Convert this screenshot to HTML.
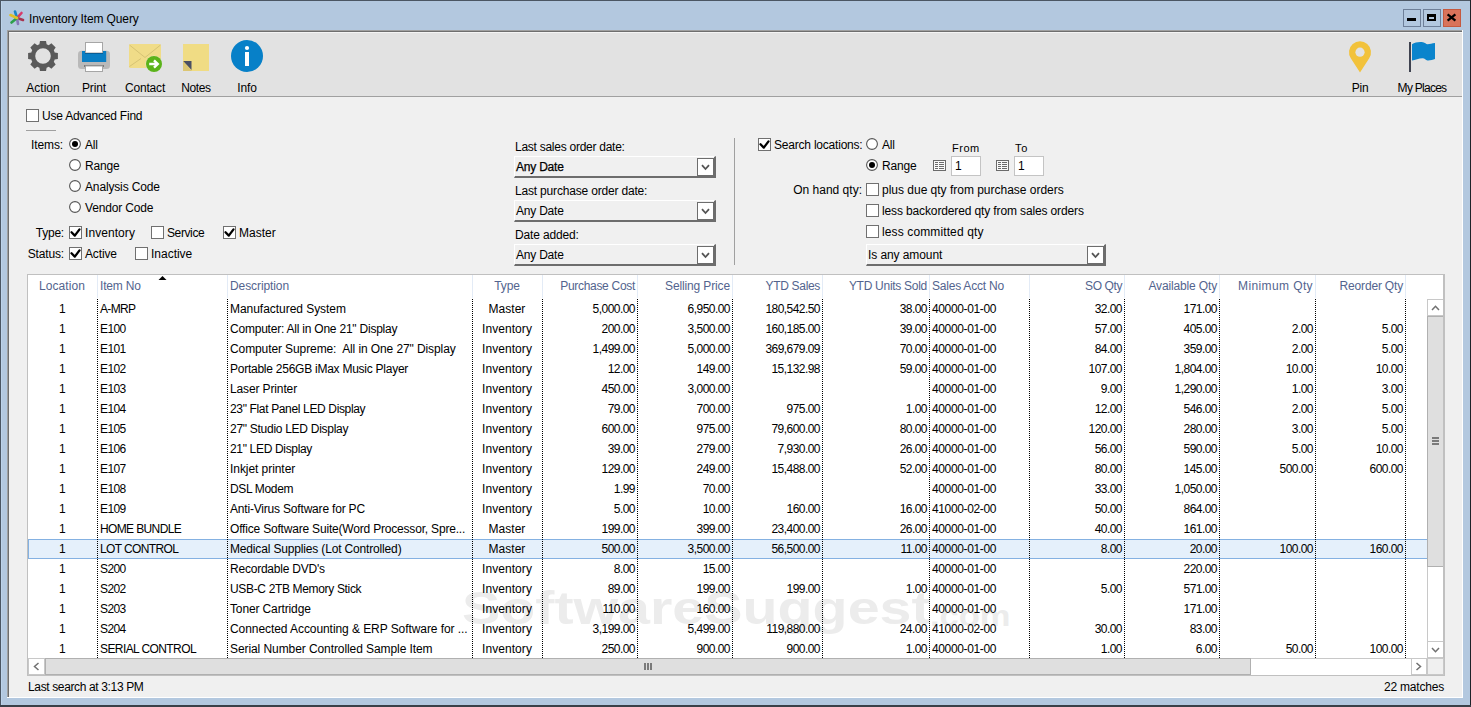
<!DOCTYPE html>
<html><head><meta charset="utf-8"><title>Inventory Item Query</title>
<style>
html,body{margin:0;padding:0}
body{width:1471px;height:707px;position:relative;overflow:hidden;background:#b3c8df;font-family:"Liberation Sans",sans-serif;font-size:12px;color:#000}
.a{position:absolute}
.t{position:absolute;white-space:pre;line-height:14px;font-size:12px}
.n{}
.h{color:#53648e}
.cb{position:absolute;width:11px;height:11px;border:1px solid #707070;background:#fff}
.rb{position:absolute;width:11px;height:11px;border:1px solid #333;border-radius:50%;background:#fff}
.combo{position:absolute;background:#f0f0f0;border-top:1px solid #fff;border-left:1px solid #fff;border-right:2px solid #6d6d6d;border-bottom:2px solid #6d6d6d;box-sizing:border-box}
.dd{position:absolute;width:17px;height:18px;box-sizing:border-box;border:1px solid #6d6d6d;background:#fff}
.dot{position:absolute;width:1px;background:repeating-linear-gradient(to bottom,#000 0,#000 1px,transparent 1px,transparent 2px)}
</style></head><body>

<div class="a" style="left:0px;top:0px;width:1471px;height:1px;background:#4b5663"></div>
<div class="a" style="left:0px;top:0px;width:1px;height:707px;background:#4b5663"></div>
<div class="a" style="left:1470px;top:0px;width:1px;height:707px;background:#1e2329"></div>
<div class="a" style="left:0px;top:705px;width:1471px;height:2px;background:#3a4048"></div>
<div class="a" style="left:1px;top:1px;width:1px;height:704px;background:#bdd3ea"></div>
<svg class="a" style="left:9px;top:10px" width="16" height="16" viewBox="0 0 16 16"><g stroke-width="2.6" stroke-linecap="round"><line x1="8" y1="8" x2="6" y2="1.5" stroke="#1a86c8"/><line x1="8" y1="8" x2="12.5" y2="3" stroke="#d83a6a"/><line x1="8" y1="8" x2="14" y2="10" stroke="#a8334f"/><line x1="8" y1="8" x2="9" y2="14" stroke="#8877b8"/><line x1="8" y1="8" x2="2.5" y2="12.5" stroke="#2da04a"/><line x1="8" y1="8" x2="1.5" y2="5" stroke="#e0c02a"/></g></svg>
<div class="t " style="left:29px;top:12px;letter-spacing:-0.12px;">Inventory Item Query</div>
<div class="a" style="left:1403px;top:9px;width:18px;height:18px;box-sizing:border-box;border:1px solid #6e7f98;background:#b3c8df"></div>
<div class="a" style="left:1407px;top:18px;width:9px;height:3px;background:#000"></div>
<div class="a" style="left:1423px;top:9px;width:18px;height:18px;box-sizing:border-box;border:1px solid #6e7f98;background:#b3c8df"></div>
<div class="a" style="left:1427px;top:14px;width:9px;height:7px;box-sizing:border-box;border:2px solid #000;border-top-width:3px"></div>
<div class="a" style="left:1443px;top:9px;width:18px;height:18px;box-sizing:border-box;border:1px solid #c5593f;background:#d9735b"></div>
<svg class="a" style="left:1446px;top:13px" width="11" height="9" viewBox="0 0 11 9"><path d="M1.6,1.4 L9.4,7.6 M9.4,1.4 L1.6,7.6" stroke="#000" stroke-width="2.3"/></svg>
<div class="a" style="left:7px;top:30px;width:1456px;height:668px;background:#f0f0f0"></div>
<div class="a" style="left:7px;top:30px;width:1455px;height:1px;background:#a0a0a0"></div>
<div class="a" style="left:7px;top:30px;width:1px;height:667px;background:#a0a0a0"></div>
<div class="a" style="left:8px;top:31px;width:1454px;height:1px;background:#6e6e6e"></div>
<div class="a" style="left:8px;top:31px;width:1px;height:666px;background:#6e6e6e"></div>
<div class="a" style="left:1462px;top:30px;width:1px;height:668px;background:#fff"></div>
<div class="a" style="left:7px;top:697px;width:1456px;height:1px;background:#fff"></div>
<div class="a" style="left:9px;top:32px;width:1453px;height:64px;background:#e2e2e2"></div>
<div class="a" style="left:9px;top:32px;width:1453px;height:1px;background:#f4f4f4"></div>
<div class="a" style="left:9px;top:96px;width:1453px;height:1px;background:#a0a0a0"></div>
<svg class="a" style="left:0;top:0" width="1471" height="100" viewBox="0 0 1471 100"><path d="M39.39,44.34 L39.98,41.10 L46.02,41.10 L46.61,44.34 L47.67,44.73 L48.69,45.21 L51.40,43.33 L55.67,47.60 L53.79,50.31 L54.27,51.33 L54.66,52.39 L57.90,52.98 L57.90,59.02 L54.66,59.61 L54.27,60.67 L53.79,61.69 L55.67,64.40 L51.40,68.67 L48.69,66.79 L47.67,67.27 L46.61,67.66 L46.02,70.90 L39.98,70.90 L39.39,67.66 L38.33,67.27 L37.31,66.79 L34.60,68.67 L30.33,64.40 L32.21,61.69 L31.73,60.67 L31.34,59.61 L28.10,59.02 L28.10,52.98 L31.34,52.39 L31.73,51.33 L32.21,50.31 L30.33,47.60 L34.60,43.33 L37.31,45.21 L38.33,44.73 Z M50.80,56 A7.8,7.8 0 1,0 35.20,56 A7.8,7.8 0 1,0 50.80,56 Z" fill="#5a5a5a" fill-rule="evenodd"/><rect x="78" y="50.7" width="32" height="18.3" rx="3.5" fill="#b9b9b9"/><rect x="82" y="51" width="24.2" height="11" fill="#0a7ec4"/><rect x="85.5" y="42.5" width="17" height="10.5" fill="#fff" stroke="#a6a6a6" stroke-width="1"/><rect x="85" y="53" width="18" height="1" fill="#0a5e96"/><rect x="84" y="65" width="20" height="2" fill="#7a7a7a"/><rect x="85.5" y="66" width="17" height="5.5" fill="#fff" stroke="#a6a6a6" stroke-width="1"/><rect x="129" y="44" width="32" height="24" rx="1.5" fill="#f0dc88"/><path d="M129.5,45 L145,57.5 L160.5,45 M129.5,66.5 L141,58.5" stroke="#d6c374" stroke-width="1" fill="none"/><circle cx="154" cy="64" r="8.6" fill="#e2e2e2" opacity="0.6"/><circle cx="154" cy="64" r="8" fill="#5bb31a"/><path d="M149.2,64 L157,64 M154,60.3 L157.8,64 L154,67.7" stroke="#fff" stroke-width="2.4" fill="none" stroke-linejoin="miter"/><rect x="183" y="44" width="26" height="27" fill="#f0dc84"/><path d="M183,61 L191.5,61 L191.5,70 Z" fill="#4a4f63"/><path d="M183,61 L183,71 L192,71 Z" fill="#dcc672"/><circle cx="247" cy="56" r="16" fill="#0780c8"/><circle cx="247" cy="48" r="2.1" fill="#fff"/><rect x="245" y="52" width="4" height="14" fill="#fff"/><path d="M1360,72.4 L1350.78,58.19 A11,11 0 1,1 1369.22,58.19 Z" fill="#f2c23b"/><circle cx="1360" cy="52.2" r="4.6" fill="#e2e2e2"/><rect x="1409" y="42" width="2" height="30" fill="#3f4350"/><path d="M1412,44.2 C1415,42.5 1419,41.6 1423,42.3 C1425,42.6 1426,44.3 1427.5,44.3 C1430,44.2 1432,43.3 1435,43 L1435,59 C1433,60 1430,60.5 1427.5,60.4 C1425.5,60.3 1425,58.4 1422.5,58.3 C1419,58.3 1415,60.5 1412,60.5 Z" fill="#0a84cc"/></svg>
<div class="t " style="left:-57px;width:200px;text-align:center;top:81px;letter-spacing:0.01px;">Action</div>
<div class="t " style="left:-6px;width:200px;text-align:center;top:81px;letter-spacing:-0.14px;">Print</div>
<div class="t " style="left:45px;width:200px;text-align:center;top:81px;letter-spacing:-0.18px;">Contact</div>
<div class="t " style="left:96px;width:200px;text-align:center;top:81px;letter-spacing:-0.41px;">Notes</div>
<div class="t " style="left:147px;width:200px;text-align:center;top:81px;letter-spacing:-0.09px;">Info</div>
<div class="t " style="left:1260px;width:200px;text-align:center;top:81px;letter-spacing:-0.23px;">Pin</div>
<div class="t " style="left:1322px;width:200px;text-align:center;top:81px;letter-spacing:-0.73px;">My Places</div>
<div class="cb" style="left:26px;top:109px"></div>
<div class="t " style="left:42px;top:109px;letter-spacing:-0.22px;">Use Advanced Find</div>
<div class="a" style="left:26px;top:130px;width:30px;height:1px;background:#a0a0a0"></div>
<div class="t " style="right:1408.0px;top:138px;letter-spacing:-0.13px;">Items:</div>
<svg class="a" style="left:69px;top:138px" width="12" height="12" viewBox="0 0 12 12"><circle cx="6" cy="6" r="5.4" fill="#fff" stroke="#555" stroke-width="1.1"/><circle cx="6" cy="6" r="3" fill="#000"/></svg>
<div class="t " style="left:85px;top:138px;letter-spacing:-0.22px;">All</div>
<svg class="a" style="left:69px;top:159px" width="12" height="12" viewBox="0 0 12 12"><circle cx="6" cy="6" r="5.4" fill="#fff" stroke="#555" stroke-width="1.1"/></svg>
<div class="t " style="left:85px;top:159px;letter-spacing:-0.16px;">Range</div>
<svg class="a" style="left:69px;top:180px" width="12" height="12" viewBox="0 0 12 12"><circle cx="6" cy="6" r="5.4" fill="#fff" stroke="#555" stroke-width="1.1"/></svg>
<div class="t " style="left:85px;top:180px;letter-spacing:-0.15px;">Analysis Code</div>
<svg class="a" style="left:69px;top:201px" width="12" height="12" viewBox="0 0 12 12"><circle cx="6" cy="6" r="5.4" fill="#fff" stroke="#555" stroke-width="1.1"/></svg>
<div class="t " style="left:85px;top:201px;letter-spacing:-0.17px;">Vendor Code</div>
<div class="t " style="right:1407.0px;top:226px;letter-spacing:-0.21px;">Type:</div>
<div class="cb" style="left:69px;top:226px"></div>
<svg class="a" style="left:69px;top:226px" width="13" height="13" viewBox="0 0 13 13"><path d="M2.5,6.3 L5.8,9.6 L10.5,3.4" stroke="#000" stroke-width="2.3" fill="none" stroke-linecap="round" stroke-linejoin="round"/></svg>
<div class="t " style="left:85px;top:226px;letter-spacing:0.07px;">Inventory</div>
<div class="cb" style="left:151px;top:226px"></div>
<div class="t " style="left:167px;top:226px;letter-spacing:-0.39px;">Service</div>
<div class="cb" style="left:223px;top:226px"></div>
<svg class="a" style="left:223px;top:226px" width="13" height="13" viewBox="0 0 13 13"><path d="M2.5,6.3 L5.8,9.6 L10.5,3.4" stroke="#000" stroke-width="2.3" fill="none" stroke-linecap="round" stroke-linejoin="round"/></svg>
<div class="t " style="left:239px;top:226px;letter-spacing:0.02px;">Master</div>
<div class="t " style="right:1407.0px;top:247px;letter-spacing:-0.16px;">Status:</div>
<div class="cb" style="left:69px;top:247px"></div>
<svg class="a" style="left:69px;top:247px" width="13" height="13" viewBox="0 0 13 13"><path d="M2.5,6.3 L5.8,9.6 L10.5,3.4" stroke="#000" stroke-width="2.3" fill="none" stroke-linecap="round" stroke-linejoin="round"/></svg>
<div class="t " style="left:85px;top:247px;letter-spacing:-0.13px;">Active</div>
<div class="cb" style="left:135px;top:247px"></div>
<div class="t " style="left:151px;top:247px;letter-spacing:-0.01px;">Inactive</div>
<div class="t " style="left:515px;top:140px;letter-spacing:-0.26px;">Last sales order date:</div>
<div class="combo" style="left:514px;top:156px;width:202px;height:22px"></div>
<div class="dd" style="left:697px;top:158px"></div>
<svg class="a" style="left:701px;top:164px" width="9" height="7" viewBox="0 0 9 7"><path d="M1,1.2 L4.5,5 L8,1.2" stroke="#555" stroke-width="1.8" fill="none"/></svg>
<div class="t " style="left:516px;top:160px;letter-spacing:-0.22px;-webkit-text-stroke:0.25px #000;">Any Date</div>
<div class="t " style="left:515px;top:184px;letter-spacing:-0.18px;">Last purchase order date:</div>
<div class="combo" style="left:514px;top:200px;width:202px;height:22px"></div>
<div class="dd" style="left:697px;top:202px"></div>
<svg class="a" style="left:701px;top:208px" width="9" height="7" viewBox="0 0 9 7"><path d="M1,1.2 L4.5,5 L8,1.2" stroke="#555" stroke-width="1.8" fill="none"/></svg>
<div class="t " style="left:516px;top:204px;letter-spacing:-0.22px;">Any Date</div>
<div class="t " style="left:515px;top:228px;letter-spacing:-0.15px;">Date added:</div>
<div class="combo" style="left:514px;top:244px;width:202px;height:22px"></div>
<div class="dd" style="left:697px;top:246px"></div>
<svg class="a" style="left:701px;top:252px" width="9" height="7" viewBox="0 0 9 7"><path d="M1,1.2 L4.5,5 L8,1.2" stroke="#555" stroke-width="1.8" fill="none"/></svg>
<div class="t " style="left:516px;top:248px;letter-spacing:-0.22px;">Any Date</div>
<div class="a" style="left:734px;top:138px;width:1px;height:127px;background:#a0a0a0"></div>
<div class="cb" style="left:758px;top:138px"></div>
<svg class="a" style="left:758px;top:138px" width="13" height="13" viewBox="0 0 13 13"><path d="M2.5,6.3 L5.8,9.6 L10.5,3.4" stroke="#000" stroke-width="2.3" fill="none" stroke-linecap="round" stroke-linejoin="round"/></svg>
<div class="t " style="left:774px;top:138px;letter-spacing:-0.21px;">Search locations:</div>
<svg class="a" style="left:866px;top:138px" width="12" height="12" viewBox="0 0 12 12"><circle cx="6" cy="6" r="5.4" fill="#fff" stroke="#555" stroke-width="1.1"/></svg>
<div class="t " style="left:882px;top:138px;letter-spacing:-0.22px;">All</div>
<svg class="a" style="left:866px;top:159px" width="12" height="12" viewBox="0 0 12 12"><circle cx="6" cy="6" r="5.4" fill="#fff" stroke="#555" stroke-width="1.1"/><circle cx="6" cy="6" r="3" fill="#000"/></svg>
<div class="t " style="left:882px;top:159px;letter-spacing:-0.16px;">Range</div>
<div class="t " style="left:952px;top:141px;font-size:11px;letter-spacing:0.5px">From</div>
<div class="t " style="left:1015px;top:141px;font-size:11px;letter-spacing:0.8px">To</div>
<svg class="a" style="left:933px;top:160px" width="13" height="11" viewBox="0 0 13 11"><rect x="0.5" y="0.5" width="12" height="10" fill="#fafafa" stroke="#6b6b6b"/><path d="M2,2.5 H5 M6,2.5 H11 M2,4.5 H5 M6,4.5 H11 M2,6.5 H5 M6,6.5 H11 M2,8.5 H5 M6,8.5 H11" stroke="#6b6b6b" stroke-width="1"/></svg>
<div class="a" style="left:951px;top:156px;width:30px;height:20px;box-sizing:border-box;border:1px solid #c4c4c4;background:#fff"></div>
<div class="t " style="left:955px;top:159px;letter-spacing:-0.59px;">1</div>
<svg class="a" style="left:996px;top:160px" width="13" height="11" viewBox="0 0 13 11"><rect x="0.5" y="0.5" width="12" height="10" fill="#fafafa" stroke="#6b6b6b"/><path d="M2,2.5 H5 M6,2.5 H11 M2,4.5 H5 M6,4.5 H11 M2,6.5 H5 M6,6.5 H11 M2,8.5 H5 M6,8.5 H11" stroke="#6b6b6b" stroke-width="1"/></svg>
<div class="a" style="left:1014px;top:156px;width:30px;height:20px;box-sizing:border-box;border:1px solid #c4c4c4;background:#fff"></div>
<div class="t " style="left:1018px;top:159px;letter-spacing:-0.59px;">1</div>
<div class="t " style="right:609.0px;top:183px;letter-spacing:0.01px;">On hand qty:</div>
<div class="cb" style="left:866px;top:183px"></div>
<div class="t " style="left:882px;top:183px;letter-spacing:-0.01px;">plus due qty from purchase orders</div>
<div class="cb" style="left:866px;top:204px"></div>
<div class="t " style="left:882px;top:204px;letter-spacing:-0.13px;">less backordered qty from sales orders</div>
<div class="cb" style="left:866px;top:225px"></div>
<div class="t " style="left:882px;top:225px;letter-spacing:0.12px;">less committed qty</div>
<div class="combo" style="left:866px;top:244px;width:240px;height:22px"></div>
<div class="dd" style="left:1087px;top:246px"></div>
<svg class="a" style="left:1091px;top:252px" width="9" height="7" viewBox="0 0 9 7"><path d="M1,1.2 L4.5,5 L8,1.2" stroke="#555" stroke-width="1.8" fill="none"/></svg>
<div class="t " style="left:868px;top:248px;letter-spacing:-0.09px;">Is any amount</div>
<div class="a" style="left:27px;top:274px;width:1418px;height:402px;background:#fff;box-sizing:border-box;border:1px solid #c0c0c0"></div>
<div class="a" style="left:97px;top:275px;width:1px;height:23px;background:#e3ebf6"></div>
<div class="a" style="left:227px;top:275px;width:1px;height:23px;background:#e3ebf6"></div>
<div class="a" style="left:472px;top:275px;width:1px;height:23px;background:#e3ebf6"></div>
<div class="a" style="left:542px;top:275px;width:1px;height:23px;background:#e3ebf6"></div>
<div class="a" style="left:637px;top:275px;width:1px;height:23px;background:#e3ebf6"></div>
<div class="a" style="left:732px;top:275px;width:1px;height:23px;background:#e3ebf6"></div>
<div class="a" style="left:822px;top:275px;width:1px;height:23px;background:#e3ebf6"></div>
<div class="a" style="left:929px;top:275px;width:1px;height:23px;background:#e3ebf6"></div>
<div class="a" style="left:1029px;top:275px;width:1px;height:23px;background:#e3ebf6"></div>
<div class="a" style="left:1124px;top:275px;width:1px;height:23px;background:#e3ebf6"></div>
<div class="a" style="left:1219px;top:275px;width:1px;height:23px;background:#e3ebf6"></div>
<div class="a" style="left:1315px;top:275px;width:1px;height:23px;background:#e3ebf6"></div>
<div class="a" style="left:1405px;top:275px;width:1px;height:23px;background:#e3ebf6"></div>
<div class="t h" style="left:-38px;width:200px;text-align:center;top:279px;letter-spacing:0.05px;">Location</div>
<div class="t h" style="left:100px;top:279px;letter-spacing:-0.20px;">Item No</div>
<div class="t h" style="left:230px;top:279px;letter-spacing:-0.09px;">Description</div>
<div class="t h" style="left:407px;width:200px;text-align:center;top:279px;letter-spacing:-0.17px;">Type</div>
<div class="t h" style="right:836.0px;top:279px;letter-spacing:-0.30px;">Purchase Cost</div>
<div class="t h" style="right:741.0px;top:279px;letter-spacing:-0.14px;">Selling Price</div>
<div class="t h" style="right:651.0px;top:279px;letter-spacing:-0.33px;">YTD Sales</div>
<div class="t h" style="right:544.0px;top:279px;letter-spacing:-0.28px;">YTD Units Sold</div>
<div class="t h" style="left:932px;top:279px;letter-spacing:-0.22px;">Sales Acct No</div>
<div class="t h" style="right:349.0px;top:279px;letter-spacing:-0.41px;">SO Qty</div>
<div class="t h" style="right:254.0px;top:279px;letter-spacing:-0.15px;">Available Qty</div>
<div class="t h" style="right:158.0px;top:279px;letter-spacing:0.39px;">Minimum Qty</div>
<div class="t h" style="right:68.0px;top:279px;letter-spacing:-0.18px;">Reorder Qty</div>
<svg class="a" style="left:158px;top:275px" width="9" height="6" viewBox="0 0 9 6"><path d="M0.5,5 L4.5,1 L8.5,5 Z" fill="#000"/></svg>
<div class="a" style="left:28px;top:539px;width:1399px;height:20px;background:#e5f0fb;box-sizing:border-box;border-top:1px solid #84b1e2;border-bottom:1px solid #84b1e2;border-left:1px solid #84b1e2"></div>
<div class="t" style="left:462px;top:578px;font-size:46px;line-height:60px;font-weight:bold;color:#ececec;transform:scaleX(1.247);transform-origin:0 0">SoftwareSuggest</div>
<div class="t" style="left:930px;top:596px;font-size:30px;line-height:40px;font-weight:bold;color:#ececec;transform:scaleX(1.15);transform-origin:0 0">.com</div>
<div class="dot" style="left:97px;top:299px;height:359px"></div>
<div class="dot" style="left:227px;top:299px;height:359px"></div>
<div class="dot" style="left:472px;top:299px;height:359px"></div>
<div class="dot" style="left:542px;top:299px;height:359px"></div>
<div class="dot" style="left:637px;top:299px;height:359px"></div>
<div class="dot" style="left:732px;top:299px;height:359px"></div>
<div class="dot" style="left:822px;top:299px;height:359px"></div>
<div class="dot" style="left:929px;top:299px;height:359px"></div>
<div class="dot" style="left:1029px;top:299px;height:359px"></div>
<div class="dot" style="left:1124px;top:299px;height:359px"></div>
<div class="dot" style="left:1219px;top:299px;height:359px"></div>
<div class="dot" style="left:1315px;top:299px;height:359px"></div>
<div class="dot" style="left:1405px;top:299px;height:359px"></div>
<div class="t " style="left:-38px;width:200px;text-align:center;top:302px;letter-spacing:-0.59px;">1</div>
<div class="t " style="left:100px;top:302px;letter-spacing:-0.64px;">A-MRP</div>
<div class="t " style="left:230px;top:302px;letter-spacing:-0.04px;">Manufactured System</div>
<div class="t " style="left:407px;width:200px;text-align:center;top:302px;letter-spacing:0.02px;">Master</div>
<div class="t n" style="right:836.0px;top:302px;letter-spacing:-0.54px;">5,000.00</div>
<div class="t n" style="right:741.0px;top:302px;letter-spacing:-0.54px;">6,950.00</div>
<div class="t n" style="right:651.0px;top:302px;letter-spacing:-0.55px;">180,542.50</div>
<div class="t n" style="right:544.0px;top:302px;letter-spacing:-0.55px;">38.00</div>
<div class="t n" style="left:932px;top:302px;letter-spacing:-0.37px;">40000-01-00</div>
<div class="t n" style="right:349.0px;top:302px;letter-spacing:-0.55px;">32.00</div>
<div class="t n" style="right:254.0px;top:302px;letter-spacing:-0.55px;">171.00</div>
<div class="t " style="left:-38px;width:200px;text-align:center;top:322px;letter-spacing:-0.59px;">1</div>
<div class="t " style="left:100px;top:322px;letter-spacing:-0.60px;">E100</div>
<div class="t " style="left:230px;top:322px;letter-spacing:-0.22px;">Computer: All in One 21" Display</div>
<div class="t " style="left:407px;width:200px;text-align:center;top:322px;letter-spacing:0.07px;">Inventory</div>
<div class="t n" style="right:836.0px;top:322px;letter-spacing:-0.55px;">200.00</div>
<div class="t n" style="right:741.0px;top:322px;letter-spacing:-0.54px;">3,500.00</div>
<div class="t n" style="right:651.0px;top:322px;letter-spacing:-0.55px;">160,185.00</div>
<div class="t n" style="right:544.0px;top:322px;letter-spacing:-0.55px;">39.00</div>
<div class="t n" style="left:932px;top:322px;letter-spacing:-0.37px;">40000-01-00</div>
<div class="t n" style="right:349.0px;top:322px;letter-spacing:-0.55px;">57.00</div>
<div class="t n" style="right:254.0px;top:322px;letter-spacing:-0.55px;">405.00</div>
<div class="t n" style="right:158.0px;top:322px;letter-spacing:-0.54px;">2.00</div>
<div class="t n" style="right:68.0px;top:322px;letter-spacing:-0.54px;">5.00</div>
<div class="t " style="left:-38px;width:200px;text-align:center;top:342px;letter-spacing:-0.59px;">1</div>
<div class="t " style="left:100px;top:342px;letter-spacing:-0.60px;">E101</div>
<div class="t " style="left:230px;top:342px;letter-spacing:-0.10px;">Computer Supreme:  All in One 27" Display</div>
<div class="t " style="left:407px;width:200px;text-align:center;top:342px;letter-spacing:0.07px;">Inventory</div>
<div class="t n" style="right:836.0px;top:342px;letter-spacing:-0.54px;">1,499.00</div>
<div class="t n" style="right:741.0px;top:342px;letter-spacing:-0.54px;">5,000.00</div>
<div class="t n" style="right:651.0px;top:342px;letter-spacing:-0.55px;">369,679.09</div>
<div class="t n" style="right:544.0px;top:342px;letter-spacing:-0.55px;">70.00</div>
<div class="t n" style="left:932px;top:342px;letter-spacing:-0.37px;">40000-01-00</div>
<div class="t n" style="right:349.0px;top:342px;letter-spacing:-0.55px;">84.00</div>
<div class="t n" style="right:254.0px;top:342px;letter-spacing:-0.55px;">359.00</div>
<div class="t n" style="right:158.0px;top:342px;letter-spacing:-0.54px;">2.00</div>
<div class="t n" style="right:68.0px;top:342px;letter-spacing:-0.54px;">5.00</div>
<div class="t " style="left:-38px;width:200px;text-align:center;top:362px;letter-spacing:-0.59px;">1</div>
<div class="t " style="left:100px;top:362px;letter-spacing:-0.60px;">E102</div>
<div class="t " style="left:230px;top:362px;letter-spacing:-0.25px;">Portable 256GB iMax Music Player</div>
<div class="t " style="left:407px;width:200px;text-align:center;top:362px;letter-spacing:0.07px;">Inventory</div>
<div class="t n" style="right:836.0px;top:362px;letter-spacing:-0.55px;">12.00</div>
<div class="t n" style="right:741.0px;top:362px;letter-spacing:-0.55px;">149.00</div>
<div class="t n" style="right:651.0px;top:362px;letter-spacing:-0.54px;">15,132.98</div>
<div class="t n" style="right:544.0px;top:362px;letter-spacing:-0.55px;">59.00</div>
<div class="t n" style="left:932px;top:362px;letter-spacing:-0.37px;">40000-01-00</div>
<div class="t n" style="right:349.0px;top:362px;letter-spacing:-0.55px;">107.00</div>
<div class="t n" style="right:254.0px;top:362px;letter-spacing:-0.54px;">1,804.00</div>
<div class="t n" style="right:158.0px;top:362px;letter-spacing:-0.55px;">10.00</div>
<div class="t n" style="right:68.0px;top:362px;letter-spacing:-0.55px;">10.00</div>
<div class="t " style="left:-38px;width:200px;text-align:center;top:382px;letter-spacing:-0.59px;">1</div>
<div class="t " style="left:100px;top:382px;letter-spacing:-0.60px;">E103</div>
<div class="t " style="left:230px;top:382px;letter-spacing:-0.13px;">Laser Printer</div>
<div class="t " style="left:407px;width:200px;text-align:center;top:382px;letter-spacing:0.07px;">Inventory</div>
<div class="t n" style="right:836.0px;top:382px;letter-spacing:-0.55px;">450.00</div>
<div class="t n" style="right:741.0px;top:382px;letter-spacing:-0.54px;">3,000.00</div>
<div class="t n" style="left:932px;top:382px;letter-spacing:-0.37px;">40000-01-00</div>
<div class="t n" style="right:349.0px;top:382px;letter-spacing:-0.54px;">9.00</div>
<div class="t n" style="right:254.0px;top:382px;letter-spacing:-0.54px;">1,290.00</div>
<div class="t n" style="right:158.0px;top:382px;letter-spacing:-0.54px;">1.00</div>
<div class="t n" style="right:68.0px;top:382px;letter-spacing:-0.54px;">3.00</div>
<div class="t " style="left:-38px;width:200px;text-align:center;top:402px;letter-spacing:-0.59px;">1</div>
<div class="t " style="left:100px;top:402px;letter-spacing:-0.60px;">E104</div>
<div class="t " style="left:230px;top:402px;letter-spacing:-0.35px;">23" Flat Panel LED Display</div>
<div class="t " style="left:407px;width:200px;text-align:center;top:402px;letter-spacing:0.07px;">Inventory</div>
<div class="t n" style="right:836.0px;top:402px;letter-spacing:-0.55px;">79.00</div>
<div class="t n" style="right:741.0px;top:402px;letter-spacing:-0.55px;">700.00</div>
<div class="t n" style="right:651.0px;top:402px;letter-spacing:-0.55px;">975.00</div>
<div class="t n" style="right:544.0px;top:402px;letter-spacing:-0.54px;">1.00</div>
<div class="t n" style="left:932px;top:402px;letter-spacing:-0.37px;">40000-01-00</div>
<div class="t n" style="right:349.0px;top:402px;letter-spacing:-0.55px;">12.00</div>
<div class="t n" style="right:254.0px;top:402px;letter-spacing:-0.55px;">546.00</div>
<div class="t n" style="right:158.0px;top:402px;letter-spacing:-0.54px;">2.00</div>
<div class="t n" style="right:68.0px;top:402px;letter-spacing:-0.54px;">5.00</div>
<div class="t " style="left:-38px;width:200px;text-align:center;top:422px;letter-spacing:-0.59px;">1</div>
<div class="t " style="left:100px;top:422px;letter-spacing:-0.60px;">E105</div>
<div class="t " style="left:230px;top:422px;letter-spacing:-0.28px;">27" Studio LED Display</div>
<div class="t " style="left:407px;width:200px;text-align:center;top:422px;letter-spacing:0.07px;">Inventory</div>
<div class="t n" style="right:836.0px;top:422px;letter-spacing:-0.55px;">600.00</div>
<div class="t n" style="right:741.0px;top:422px;letter-spacing:-0.55px;">975.00</div>
<div class="t n" style="right:651.0px;top:422px;letter-spacing:-0.54px;">79,600.00</div>
<div class="t n" style="right:544.0px;top:422px;letter-spacing:-0.55px;">80.00</div>
<div class="t n" style="left:932px;top:422px;letter-spacing:-0.37px;">40000-01-00</div>
<div class="t n" style="right:349.0px;top:422px;letter-spacing:-0.55px;">120.00</div>
<div class="t n" style="right:254.0px;top:422px;letter-spacing:-0.55px;">280.00</div>
<div class="t n" style="right:158.0px;top:422px;letter-spacing:-0.54px;">3.00</div>
<div class="t n" style="right:68.0px;top:422px;letter-spacing:-0.54px;">5.00</div>
<div class="t " style="left:-38px;width:200px;text-align:center;top:442px;letter-spacing:-0.59px;">1</div>
<div class="t " style="left:100px;top:442px;letter-spacing:-0.60px;">E106</div>
<div class="t " style="left:230px;top:442px;letter-spacing:-0.33px;">21" LED Display</div>
<div class="t " style="left:407px;width:200px;text-align:center;top:442px;letter-spacing:0.07px;">Inventory</div>
<div class="t n" style="right:836.0px;top:442px;letter-spacing:-0.55px;">39.00</div>
<div class="t n" style="right:741.0px;top:442px;letter-spacing:-0.55px;">279.00</div>
<div class="t n" style="right:651.0px;top:442px;letter-spacing:-0.54px;">7,930.00</div>
<div class="t n" style="right:544.0px;top:442px;letter-spacing:-0.55px;">26.00</div>
<div class="t n" style="left:932px;top:442px;letter-spacing:-0.37px;">40000-01-00</div>
<div class="t n" style="right:349.0px;top:442px;letter-spacing:-0.55px;">56.00</div>
<div class="t n" style="right:254.0px;top:442px;letter-spacing:-0.55px;">590.00</div>
<div class="t n" style="right:158.0px;top:442px;letter-spacing:-0.54px;">5.00</div>
<div class="t n" style="right:68.0px;top:442px;letter-spacing:-0.55px;">10.00</div>
<div class="t " style="left:-38px;width:200px;text-align:center;top:462px;letter-spacing:-0.59px;">1</div>
<div class="t " style="left:100px;top:462px;letter-spacing:-0.60px;">E107</div>
<div class="t " style="left:230px;top:462px;letter-spacing:-0.06px;">Inkjet printer</div>
<div class="t " style="left:407px;width:200px;text-align:center;top:462px;letter-spacing:0.07px;">Inventory</div>
<div class="t n" style="right:836.0px;top:462px;letter-spacing:-0.55px;">129.00</div>
<div class="t n" style="right:741.0px;top:462px;letter-spacing:-0.55px;">249.00</div>
<div class="t n" style="right:651.0px;top:462px;letter-spacing:-0.54px;">15,488.00</div>
<div class="t n" style="right:544.0px;top:462px;letter-spacing:-0.55px;">52.00</div>
<div class="t n" style="left:932px;top:462px;letter-spacing:-0.37px;">40000-01-00</div>
<div class="t n" style="right:349.0px;top:462px;letter-spacing:-0.55px;">80.00</div>
<div class="t n" style="right:254.0px;top:462px;letter-spacing:-0.55px;">145.00</div>
<div class="t n" style="right:158.0px;top:462px;letter-spacing:-0.55px;">500.00</div>
<div class="t n" style="right:68.0px;top:462px;letter-spacing:-0.55px;">600.00</div>
<div class="t " style="left:-38px;width:200px;text-align:center;top:482px;letter-spacing:-0.59px;">1</div>
<div class="t " style="left:100px;top:482px;letter-spacing:-0.60px;">E108</div>
<div class="t " style="left:230px;top:482px;letter-spacing:-0.34px;">DSL Modem</div>
<div class="t " style="left:407px;width:200px;text-align:center;top:482px;letter-spacing:0.07px;">Inventory</div>
<div class="t n" style="right:836.0px;top:482px;letter-spacing:-0.54px;">1.99</div>
<div class="t n" style="right:741.0px;top:482px;letter-spacing:-0.55px;">70.00</div>
<div class="t n" style="left:932px;top:482px;letter-spacing:-0.37px;">40000-01-00</div>
<div class="t n" style="right:349.0px;top:482px;letter-spacing:-0.55px;">33.00</div>
<div class="t n" style="right:254.0px;top:482px;letter-spacing:-0.54px;">1,050.00</div>
<div class="t " style="left:-38px;width:200px;text-align:center;top:502px;letter-spacing:-0.59px;">1</div>
<div class="t " style="left:100px;top:502px;letter-spacing:-0.60px;">E109</div>
<div class="t " style="left:230px;top:502px;letter-spacing:-0.19px;">Anti-Virus Software for PC</div>
<div class="t " style="left:407px;width:200px;text-align:center;top:502px;letter-spacing:0.07px;">Inventory</div>
<div class="t n" style="right:836.0px;top:502px;letter-spacing:-0.54px;">5.00</div>
<div class="t n" style="right:741.0px;top:502px;letter-spacing:-0.55px;">10.00</div>
<div class="t n" style="right:651.0px;top:502px;letter-spacing:-0.55px;">160.00</div>
<div class="t n" style="right:544.0px;top:502px;letter-spacing:-0.55px;">16.00</div>
<div class="t n" style="left:932px;top:502px;letter-spacing:-0.37px;">41000-02-00</div>
<div class="t n" style="right:349.0px;top:502px;letter-spacing:-0.55px;">50.00</div>
<div class="t n" style="right:254.0px;top:502px;letter-spacing:-0.55px;">864.00</div>
<div class="t " style="left:-38px;width:200px;text-align:center;top:522px;letter-spacing:-0.59px;">1</div>
<div class="t " style="left:100px;top:522px;letter-spacing:-0.63px;">HOME BUNDLE</div>
<div class="t " style="left:230px;top:522px;letter-spacing:-0.19px;">Office Software Suite(Word Processor, Spre...</div>
<div class="t " style="left:407px;width:200px;text-align:center;top:522px;letter-spacing:0.02px;">Master</div>
<div class="t n" style="right:836.0px;top:522px;letter-spacing:-0.55px;">199.00</div>
<div class="t n" style="right:741.0px;top:522px;letter-spacing:-0.55px;">399.00</div>
<div class="t n" style="right:651.0px;top:522px;letter-spacing:-0.54px;">23,400.00</div>
<div class="t n" style="right:544.0px;top:522px;letter-spacing:-0.55px;">26.00</div>
<div class="t n" style="left:932px;top:522px;letter-spacing:-0.37px;">40000-01-00</div>
<div class="t n" style="right:349.0px;top:522px;letter-spacing:-0.55px;">40.00</div>
<div class="t n" style="right:254.0px;top:522px;letter-spacing:-0.55px;">161.00</div>
<div class="t " style="left:-38px;width:200px;text-align:center;top:542px;letter-spacing:-0.59px;">1</div>
<div class="t " style="left:100px;top:542px;letter-spacing:-0.62px;">LOT CONTROL</div>
<div class="t " style="left:230px;top:542px;letter-spacing:-0.16px;">Medical Supplies (Lot Controlled)</div>
<div class="t " style="left:407px;width:200px;text-align:center;top:542px;letter-spacing:0.02px;">Master</div>
<div class="t n" style="right:836.0px;top:542px;letter-spacing:-0.55px;">500.00</div>
<div class="t n" style="right:741.0px;top:542px;letter-spacing:-0.54px;">3,500.00</div>
<div class="t n" style="right:651.0px;top:542px;letter-spacing:-0.54px;">56,500.00</div>
<div class="t n" style="right:544.0px;top:542px;letter-spacing:-0.55px;">11.00</div>
<div class="t n" style="left:932px;top:542px;letter-spacing:-0.37px;">40000-01-00</div>
<div class="t n" style="right:349.0px;top:542px;letter-spacing:-0.54px;">8.00</div>
<div class="t n" style="right:254.0px;top:542px;letter-spacing:-0.55px;">20.00</div>
<div class="t n" style="right:158.0px;top:542px;letter-spacing:-0.55px;">100.00</div>
<div class="t n" style="right:68.0px;top:542px;letter-spacing:-0.55px;">160.00</div>
<div class="t " style="left:-38px;width:200px;text-align:center;top:562px;letter-spacing:-0.59px;">1</div>
<div class="t " style="left:100px;top:562px;letter-spacing:-0.60px;">S200</div>
<div class="t " style="left:230px;top:562px;letter-spacing:-0.22px;">Recordable DVD's</div>
<div class="t " style="left:407px;width:200px;text-align:center;top:562px;letter-spacing:0.07px;">Inventory</div>
<div class="t n" style="right:836.0px;top:562px;letter-spacing:-0.54px;">8.00</div>
<div class="t n" style="right:741.0px;top:562px;letter-spacing:-0.55px;">15.00</div>
<div class="t n" style="left:932px;top:562px;letter-spacing:-0.37px;">40000-01-00</div>
<div class="t n" style="right:254.0px;top:562px;letter-spacing:-0.55px;">220.00</div>
<div class="t " style="left:-38px;width:200px;text-align:center;top:582px;letter-spacing:-0.59px;">1</div>
<div class="t " style="left:100px;top:582px;letter-spacing:-0.60px;">S202</div>
<div class="t " style="left:230px;top:582px;letter-spacing:-0.34px;">USB-C 2TB Memory Stick</div>
<div class="t " style="left:407px;width:200px;text-align:center;top:582px;letter-spacing:0.07px;">Inventory</div>
<div class="t n" style="right:836.0px;top:582px;letter-spacing:-0.55px;">89.00</div>
<div class="t n" style="right:741.0px;top:582px;letter-spacing:-0.55px;">199.00</div>
<div class="t n" style="right:651.0px;top:582px;letter-spacing:-0.55px;">199.00</div>
<div class="t n" style="right:544.0px;top:582px;letter-spacing:-0.54px;">1.00</div>
<div class="t n" style="left:932px;top:582px;letter-spacing:-0.37px;">40000-01-00</div>
<div class="t n" style="right:349.0px;top:582px;letter-spacing:-0.54px;">5.00</div>
<div class="t n" style="right:254.0px;top:582px;letter-spacing:-0.55px;">571.00</div>
<div class="t " style="left:-38px;width:200px;text-align:center;top:602px;letter-spacing:-0.59px;">1</div>
<div class="t " style="left:100px;top:602px;letter-spacing:-0.60px;">S203</div>
<div class="t " style="left:230px;top:602px;letter-spacing:-0.13px;">Toner Cartridge</div>
<div class="t " style="left:407px;width:200px;text-align:center;top:602px;letter-spacing:0.07px;">Inventory</div>
<div class="t n" style="right:836.0px;top:602px;letter-spacing:-0.55px;">110.00</div>
<div class="t n" style="right:741.0px;top:602px;letter-spacing:-0.55px;">160.00</div>
<div class="t n" style="left:932px;top:602px;letter-spacing:-0.37px;">40000-01-00</div>
<div class="t n" style="right:254.0px;top:602px;letter-spacing:-0.55px;">171.00</div>
<div class="t " style="left:-38px;width:200px;text-align:center;top:622px;letter-spacing:-0.59px;">1</div>
<div class="t " style="left:100px;top:622px;letter-spacing:-0.60px;">S204</div>
<div class="t " style="left:230px;top:622px;letter-spacing:-0.07px;">Connected Accounting &amp; ERP Software for ...</div>
<div class="t " style="left:407px;width:200px;text-align:center;top:622px;letter-spacing:0.07px;">Inventory</div>
<div class="t n" style="right:836.0px;top:622px;letter-spacing:-0.54px;">3,199.00</div>
<div class="t n" style="right:741.0px;top:622px;letter-spacing:-0.54px;">5,499.00</div>
<div class="t n" style="right:651.0px;top:622px;letter-spacing:-0.55px;">119,880.00</div>
<div class="t n" style="right:544.0px;top:622px;letter-spacing:-0.55px;">24.00</div>
<div class="t n" style="left:932px;top:622px;letter-spacing:-0.37px;">41000-02-00</div>
<div class="t n" style="right:349.0px;top:622px;letter-spacing:-0.55px;">30.00</div>
<div class="t n" style="right:254.0px;top:622px;letter-spacing:-0.55px;">83.00</div>
<div class="t " style="left:-38px;width:200px;text-align:center;top:642px;letter-spacing:-0.59px;">1</div>
<div class="t " style="left:100px;top:642px;letter-spacing:-0.59px;">SERIAL CONTROL</div>
<div class="t " style="left:230px;top:642px;letter-spacing:-0.08px;">Serial Number Controlled Sample Item</div>
<div class="t " style="left:407px;width:200px;text-align:center;top:642px;letter-spacing:0.07px;">Inventory</div>
<div class="t n" style="right:836.0px;top:642px;letter-spacing:-0.55px;">250.00</div>
<div class="t n" style="right:741.0px;top:642px;letter-spacing:-0.55px;">900.00</div>
<div class="t n" style="right:651.0px;top:642px;letter-spacing:-0.55px;">900.00</div>
<div class="t n" style="right:544.0px;top:642px;letter-spacing:-0.54px;">1.00</div>
<div class="t n" style="left:932px;top:642px;letter-spacing:-0.37px;">40000-01-00</div>
<div class="t n" style="right:349.0px;top:642px;letter-spacing:-0.54px;">1.00</div>
<div class="t n" style="right:254.0px;top:642px;letter-spacing:-0.54px;">6.00</div>
<div class="t n" style="right:158.0px;top:642px;letter-spacing:-0.55px;">50.00</div>
<div class="t n" style="right:68.0px;top:642px;letter-spacing:-0.55px;">100.00</div>
<div class="a" style="left:1427px;top:299px;width:17px;height:359px;background:#fff;box-sizing:border-box;border-left:1px solid #c8c8c8"></div>
<div class="a" style="left:1427px;top:299px;width:17px;height:17px;background:#fff;box-sizing:border-box;border:1px solid #c8c8c8"></div>
<svg class="a" style="left:1431px;top:305px" width="9" height="6" viewBox="0 0 9 6"><path d="M1,5 L4.5,1.3 L8,5" stroke="#707070" stroke-width="1.5" fill="none"/></svg>
<div class="a" style="left:1427px;top:316px;width:17px;height:251px;background:#dfdfdf;box-sizing:border-box;border:1px solid #b0b0b0"></div>
<div class="a" style="left:1432px;top:437px;width:7px;height:2px;background:#7a7a7a"></div>
<div class="a" style="left:1432px;top:440px;width:7px;height:2px;background:#7a7a7a"></div>
<div class="a" style="left:1432px;top:443px;width:7px;height:2px;background:#7a7a7a"></div>
<div class="a" style="left:1427px;top:641px;width:17px;height:17px;background:#fff;box-sizing:border-box;border:1px solid #c8c8c8"></div>
<svg class="a" style="left:1431px;top:647px" width="9" height="6" viewBox="0 0 9 6"><path d="M1,1 L4.5,4.7 L8,1" stroke="#707070" stroke-width="1.5" fill="none"/></svg>
<div class="a" style="left:1443px;top:275px;width:1px;height:400px;background:#c0c0c0"></div>
<div class="a" style="left:28px;top:658px;width:1416px;height:17px;background:#fff;box-sizing:border-box;border-top:1px solid #c8c8c8"></div>
<div class="a" style="left:28px;top:658px;width:17px;height:17px;background:#fff;box-sizing:border-box;border:1px solid #c8c8c8"></div>
<svg class="a" style="left:33px;top:662px" width="7" height="9" viewBox="0 0 7 9"><path d="M5.5,1 L1.5,4.5 L5.5,8" stroke="#707070" stroke-width="1.5" fill="none"/></svg>
<div class="a" style="left:45px;top:658px;width:1206px;height:17px;background:#dfdfdf;box-sizing:border-box;border:1px solid #b0b0b0"></div>
<div class="a" style="left:644px;top:663px;width:2px;height:7px;background:#7a7a7a"></div>
<div class="a" style="left:647px;top:663px;width:2px;height:7px;background:#7a7a7a"></div>
<div class="a" style="left:650px;top:663px;width:2px;height:7px;background:#7a7a7a"></div>
<div class="a" style="left:1411px;top:658px;width:16px;height:17px;background:#fff;box-sizing:border-box;border:1px solid #c8c8c8"></div>
<svg class="a" style="left:1415px;top:662px" width="7" height="9" viewBox="0 0 7 9"><path d="M1.5,1 L5.5,4.5 L1.5,8" stroke="#707070" stroke-width="1.5" fill="none"/></svg>
<div class="a" style="left:1427px;top:658px;width:17px;height:17px;background:#f0f0f0;box-sizing:border-box;border:1px solid #c8c8c8"></div>
<div class="a" style="left:27px;top:675px;width:1418px;height:1px;background:#c0c0c0"></div>
<div class="t " style="left:28px;top:680px;letter-spacing:-0.36px;">Last search at 3:13 PM</div>
<div class="t " style="right:27.0px;top:680px;letter-spacing:-0.20px;">22 matches</div>
</body></html>
